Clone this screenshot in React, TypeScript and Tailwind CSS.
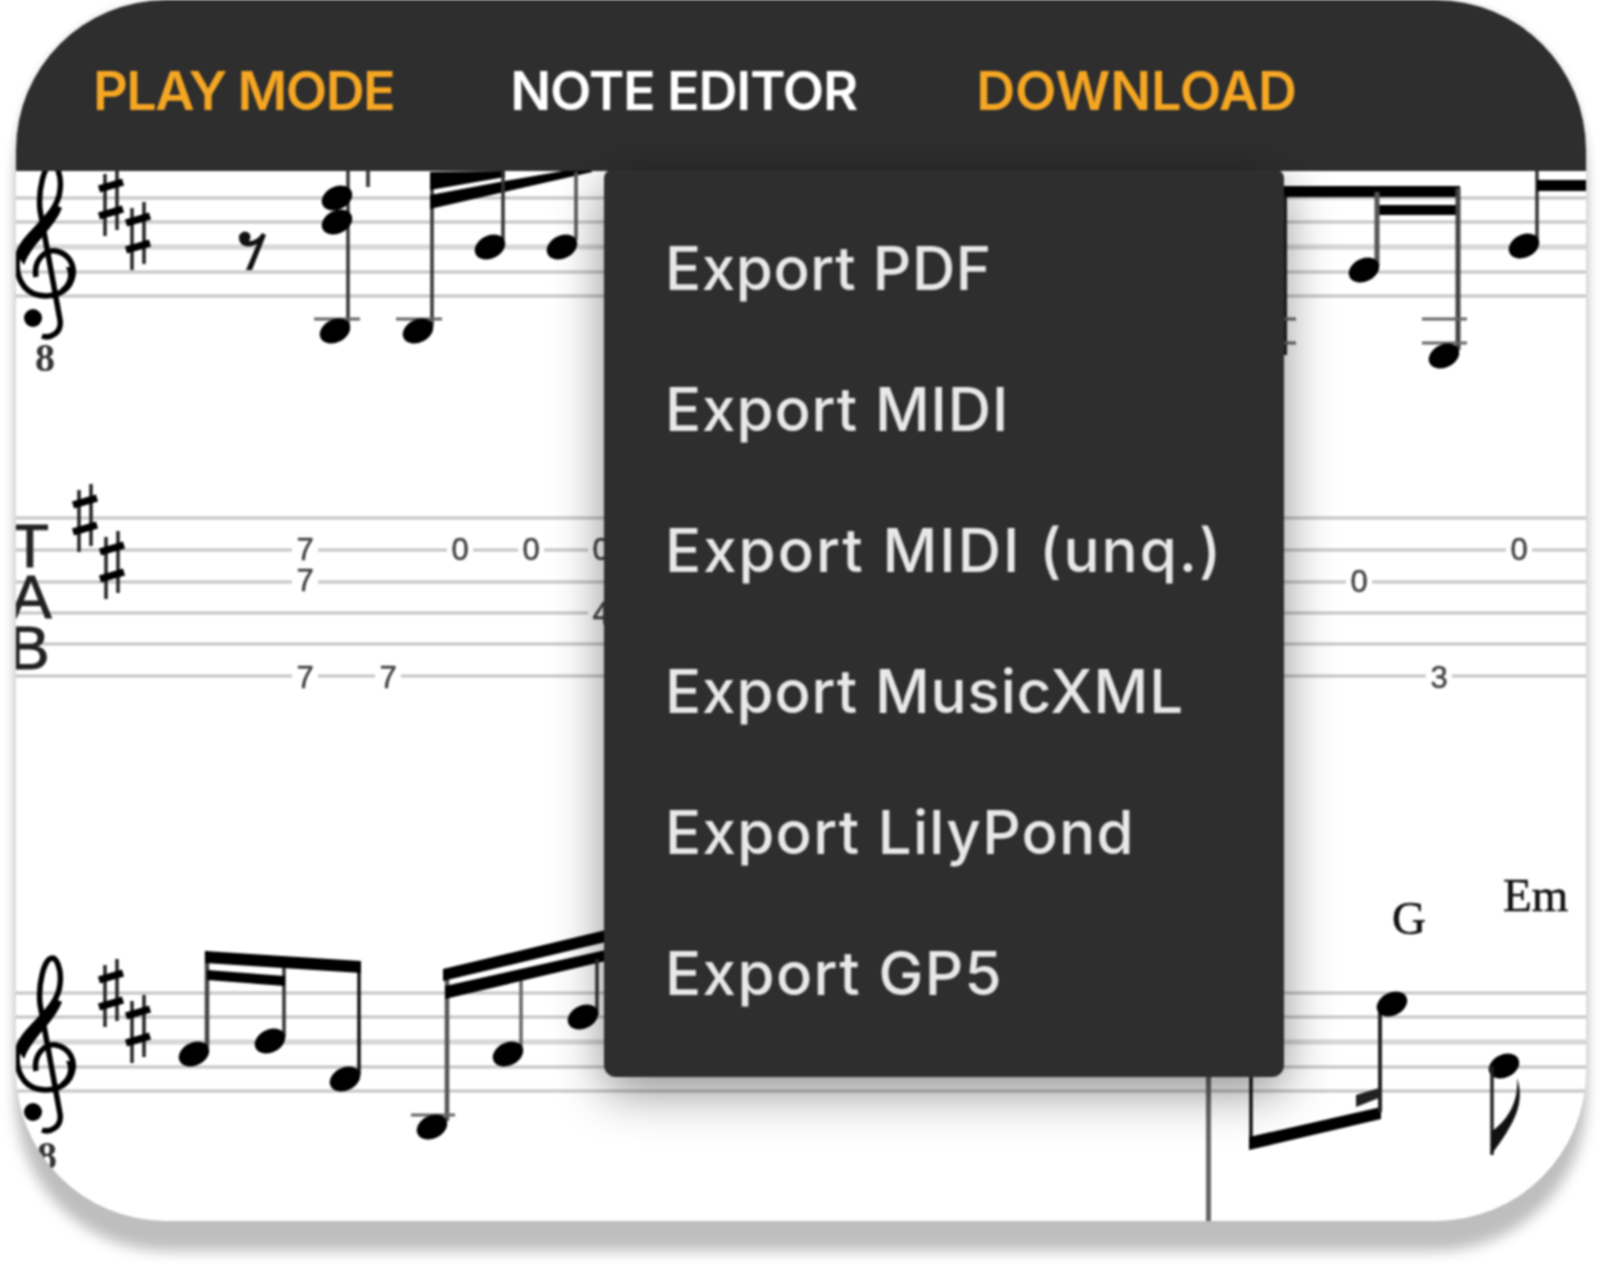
import React from "react";

const LINE = "#c4c4c4";

function Sharp({ x, y }: { x: number; y: number }) {
  return (
    <g>
      <path d={`M${x - 6} ${y - 28}V${y + 34}M${x + 6} ${y - 34}V${y + 28}`} stroke="#222" strokeWidth="3.5" fill="none" />
      <path d={`M${x - 12} ${y - 13}L${x + 12} ${y - 20}M${x - 12} ${y + 14}L${x + 12} ${y + 7}`} stroke="#000" strokeWidth="7.5" fill="none" />
    </g>
  );
}

function Head({ x, y }: { x: number; y: number }) {
  return <ellipse cx={x} cy={y} rx="16" ry="11.5" transform={`rotate(-26 ${x} ${y})`} fill="#000" />;
}

function Stem({ x, y1, y2, w = 3.5, c = "#333" }: { x: number; y1: number; y2: number; w?: number; c?: string }) {
  return <line x1={x} x2={x} y1={y1} y2={y2} stroke={c} strokeWidth={w} />;
}

function Ledger({ x1, x2, y }: { x1: number; x2: number; y: number }) {
  return <line x1={x1} x2={x2} y1={y} y2={y} stroke="#666" strokeWidth="3" />;
}

function Clef({ dy }: { dy: number }) {
  return (
    <g transform={`translate(0 ${dy})`}>
      <path
        d="M36 1072C33 1056 45 1044 56 1046C70 1049 76 1062 72 1074C68 1088 52 1093 38 1090C24 1087 14 1072 18 1050C22 1030 58 1012 60 985C62 970 56 958 52 959C44 960 38 985 40 1005L60 1115C62 1128 50 1134 42 1131"
        fill="none"
        stroke="#000"
        strokeWidth="5.5"
      />
      <path d="M17 1050C22 1030 45 1018 56 1000L62 1003C54 1024 32 1038 24 1060Z" fill="#000" />
      <path d="M70 1062C76 1070 74 1082 64 1088L60 1084C68 1078 70 1070 66 1062Z" fill="#000" />
      <circle cx="33" cy="1113" r="9" fill="#000" />
    </g>
  );
}

function Digit({ x, y, t }: { x: number; y: number; t: string }) {
  return (
    <g>
      <rect x={x - 13} y={y - 14} width="26" height="28" fill="#fff" />
      <text x={x} y={y + 11} textAnchor="middle" fontSize="31" fontFamily="'Liberation Sans', sans-serif" fill="#3f3f3f" stroke="#3f3f3f" strokeWidth="0.5">
        {t}
      </text>
    </g>
  );
}

function Staff({ ys, thick }: { ys: number[]; thick?: number }) {
  return (
    <g>
      {ys.map((y, i) => (
        <line key={y} x1="16" x2="1586" y1={y} y2={y} stroke={i === thick ? "#d6d6d6" : LINE} strokeWidth={i === thick ? 5 : 3} />
      ))}
    </g>
  );
}

function Score() {
  return (
    <svg viewBox="16 171 1570 1050" className="block w-full h-full">
      <Staff ys={[198, 222, 247, 272, 296]} thick={2} />
      <Staff ys={[518, 550, 582, 613, 644, 676]} />
      <Staff ys={[993, 1017, 1042, 1067, 1091]} thick={2} />

      {/* first staff */}
      <Clef dy={-795} />
      <text x="45" y="371" textAnchor="middle" fontSize="40" fontWeight="700" fontFamily="'Liberation Serif', serif" fill="#333">
        8
      </text>
      <Sharp x={111} y={202} />
      <Sharp x={138} y={236} />
      <path d="M240 234C244 244 256 243 262 233L266 235L252 270L246 270L257 244C250 248 238 248 239 236Z" fill="#111" />
      <circle cx="245" cy="237" r="5.5" fill="#111" />
      <Stem x={348} y1={171} y2={328} />
      <Head x={337} y={198} />
      <Head x={337} y={222} />
      <Ledger x1={314} x2={360} y={319} />
      <Head x={335} y={331} />
      <Stem x={368} y1={171} y2={187} w={4} c="#444" />
      <Stem x={432} y1={180} y2={326} />
      <Ledger x1={396} x2={442} y={319} />
      <Head x={418} y={331} />
      <polygon points="430,172 505,171 505,177 430,190" fill="#000" />
      <polygon points="430,195 505,181 592,166 592,172 430,209" fill="#000" />
      <Stem x={503} y1={171} y2={240} />
      <Head x={490} y={247} />
      <Stem x={576} y1={172} y2={240} c="#555" />
      <Head x={562} y={247} />

      <Stem x={1285} y1={188} y2={355} w={4} c="#222" />
      <Ledger x1={1284} x2={1296} y={319} />
      <Ledger x1={1284} x2={1296} y={343} />
      <rect x="1284" y="186" width="176" height="11" fill="#000" />
      <rect x="1376" y="205" width="83" height="10" fill="#000" />
      <Stem x={1377} y1={192} y2={266} w={5} c="#555" />
      <Head x={1364} y={270} />
      <Stem x={1458} y1={188} y2={350} w={5} c="#444" />
      <Ledger x1={1422} x2={1467} y={319} />
      <Ledger x1={1422} x2={1467} y={343} />
      <Head x={1444} y={356} />
      <Stem x={1537} y1={171} y2={245} />
      <Head x={1524} y={246} />
      <rect x="1537" y="180" width="50" height="11" fill="#000" />

      {/* tab staff */}
      <g fontFamily="'Liberation Sans', sans-serif" fontSize="62" fill="#222" stroke="#222" strokeWidth="1" textAnchor="middle">
        <text x="30" y="567">T</text>
        <text x="31" y="618">A</text>
        <text x="29" y="669">B</text>
      </g>
      <Sharp x={85} y={518} />
      <Sharp x={112} y={565} />
      <Digit x={305} y={549} t="7" />
      <Digit x={305} y={580} t="7" />
      <Digit x={460} y={549} t="0" />
      <Digit x={531} y={549} t="0" />
      <Digit x={601} y={549} t="0" />
      <Digit x={601} y={613} t="4" />
      <Digit x={305} y={677} t="7" />
      <Digit x={388} y={677} t="7" />
      <Digit x={1359} y={581} t="0" />
      <Digit x={1519} y={549} t="0" />
      <Digit x={1439} y={677} t="3" />

      {/* second staff */}
      <g transform="translate(0 -1)">
        <Clef dy={0} />
        <text x="47" y="1170" textAnchor="middle" fontSize="40" fontWeight="700" fontFamily="'Liberation Serif', serif" fill="#333">
          8
        </text>
        <Sharp x={111} y={994} />
        <Sharp x={138} y={1030} />
        <Stem x={207} y1={952} y2={1048} c="#444" w={4.5} />
        <Head x={194} y={1055} />
        <Stem x={284} y1={969} y2={1038} />
        <Head x={270} y={1042} />
        <Stem x={359} y1={963} y2={1076} c="#111" />
        <Head x={345} y={1080} />
        <polygon points="205,952 361,962 361,974 205,964" fill="#000" />
        <polygon points="207,971 285,977 285,987 207,981" fill="#000" />
        <Stem x={447} y1={975} y2={1122} w={4.5} c="#555" />
        <Ledger x1={411} x2={455} y={1116} />
        <Head x={432} y={1128} />
        <polygon points="443,970 610,930 610,942 443,982" fill="#000" />
        <polygon points="445,987 610,950 610,961 445,1000" fill="#000" />
        <Stem x={521} y1={982} y2={1052} c="#666" />
        <Head x={508} y={1055} />
        <Stem x={597} y1={960} y2={1016} />
        <Head x={583} y={1018} />
      </g>

      <Stem x={1208.5} y1={1077} y2={1221} w={5} c="#666" />
      <Stem x={1251} y1={1077} y2={1148} c="#111" />
      <polygon points="1249,1137 1381,1107 1381,1119 1249,1150" fill="#000" />
      <polygon points="1356,1095 1379,1088 1379,1098 1356,1107" fill="#222" />
      <Stem x={1380} y1={1004} y2={1112} w={4} c="#222" />
      <Head x={1392} y={1004} />
      <Head x={1504} y={1066} />
      <Stem x={1492} y1={1066} y2={1155} w={3.5} c="#222" />
      <path d="M1491 1155L1491 1132C1505 1122 1519 1105 1517 1078C1525 1102 1516 1122 1491 1155Z" fill="#111" />
      <g fontFamily="'Liberation Serif', serif" fontSize="47" fill="#111" stroke="#111" strokeWidth="0.6">
        <text x="1392" y="934">G</text>
        <text x="1503" y="911">Em</text>
      </g>
    </svg>
  );
}

const items = [
  { t: "Export PDF", c: "tracking-[0.6px]" },
  { t: "Export MIDI", c: "tracking-[0.9px]" },
  { t: "Export MIDI (unq.)", c: "tracking-[2px]" },
  { t: "Export MusicXML", c: "tracking-[0.9px]" },
  { t: "Export LilyPond", c: "tracking-[1.3px]" },
  { t: "Export GP5", c: "tracking-[1.4px]" },
];

export default function App() {
  return (
    <div className="w-[1600px] h-[1272px] bg-white pl-4 pr-[14px] blur-[0.9px] font-['Inter',sans-serif]">
      <div className="relative h-[1221px] rounded-[150px] bg-white shadow-[0_30px_14px_0_#bebebe,0_0_8px_rgba(0,0,0,0.12)]">
        <div className="h-full flex flex-col rounded-[150px] overflow-hidden">
          <nav className="h-[171px] shrink-0 bg-[#2e2e2e] flex items-center gap-[116px] pl-[77px] pt-[10px] text-[54px] font-semibold">
            <span className="text-[#f5a623] tracking-[-1.6px]">PLAY MODE</span>
            <span className="text-white tracking-[-1.2px]">NOTE EDITOR</span>
            <span className="text-[#f5a623] tracking-[-0.2px] ml-[3px]">DOWNLOAD</span>
          </nav>
          <div className="flex-1 min-h-0">
            <Score />
          </div>
        </div>
        <ul className="absolute left-[588px] top-[170px] w-[680px] h-[907px] bg-[#2e2e2e] rounded-b-[12px] rounded-t-[8px] shadow-[0_14px_50px_rgba(0,0,0,0.45)] pt-[27px] pl-[61px] text-[#e8e8e8] text-[60px] font-medium">
          {items.map((i) => (
            <li key={i.t} className={`h-[141px] flex items-center ${i.c}`}>
              {i.t}
            </li>
          ))}
        </ul>
      </div>
    </div>
  );
}
